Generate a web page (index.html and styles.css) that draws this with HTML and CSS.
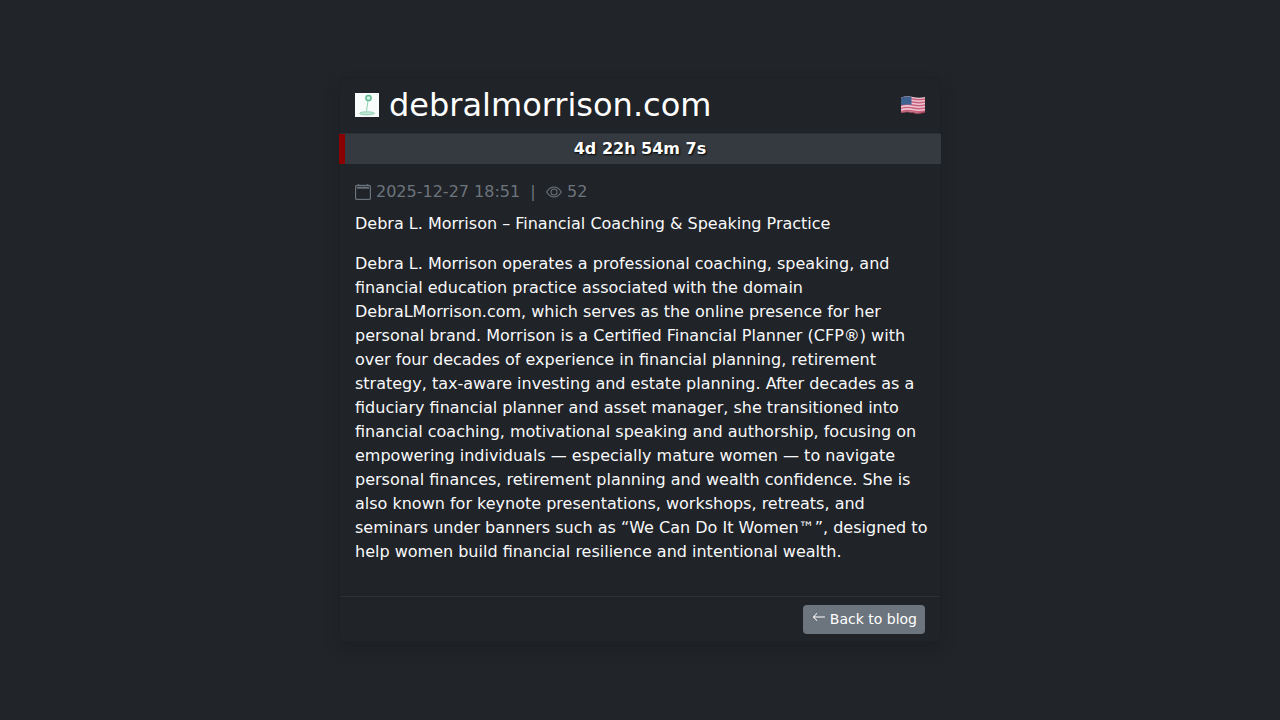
FILE: index.html
```html
<!DOCTYPE html>
<html lang="en">
<head>
    <meta charset="UTF-8">
    <title>debralmorrison.com</title>
    <link rel="stylesheet" href="styles.css">
</head>
<body>
    <div class="post-card">
        <div class="post-header">
            <h1 class="post-title">
                <svg class="favicon" width="24" height="24" viewBox="0 0 24 24">
                    <rect width="24" height="24" fill="#f8fcfa"/>
                    <circle cx="13.5" cy="5" r="2.6" fill="#d5efe3" stroke="#5fbb92" stroke-width="1.5"/>
                    <path d="M13 8 L11.5 18" stroke="#8fd2b4" stroke-width="1" fill="none"/>
                    <ellipse cx="12" cy="20.3" rx="7.5" ry="1.5" fill="#c3e8d6" stroke="#7cc8a6" stroke-width=".8"/>
                </svg>
                <span>debralmorrison.com</span>
            </h1>
            <svg class="flag" width="24" height="18" viewBox="0 0 24 18">
                <path d="M0 1.5 Q6 -.5 12 1 T24 1 V16 Q18 18.500 12 16.800 T0 17 Z" fill="#eec6d2"/>
                <path d="M0 3.500 Q6 1.500 12 3 T24 3 M0 6.500 Q6 4.500 12 6 T24 6 M0 9.500 Q6 7.500 12 9 T24 9 M0 12.500 Q6 10.500 12 12 T24 12 M0 15.500 Q6 13.500 12 15 T24 15" fill="none" stroke="#c9607c" stroke-width="1.300"/>
                <path d="M0 16.500 Q6 15 12 16.500 T24 16" fill="none" stroke="#a03a55" stroke-width="1.200"/>
                <path d="M0 1.500 Q5 -.2 10.500 .8 V8.800 Q5 8 0 9.200 Z" fill="#3f6290"/>
            </svg>
        </div>
        <div class="countdown">4d 22h 54m 7s</div>
        <div class="post-body">
            <div class="post-meta">
                <svg class="meta-icon date-icon" width="16" height="16" viewBox="0 0 16 16" fill="currentColor" stroke="currentColor" stroke-width=".35">
                    <path d="M3.500 0a.5.5 0 0 1 .5.5V1h8V.5a.5.5 0 0 1 1 0V1h1a2 2 0 0 1 2 2v11a2 2 0 0 1-2 2H2a2 2 0 0 1-2-2V3a2 2 0 0 1 2-2h1V.5a.5.5 0 0 1 .5-.5zM2 2a1 1 0 0 0-1 1v11a1 1 0 0 0 1 1h12a1 1 0 0 0 1-1V3a1 1 0 0 0-1-1H2z"/>
                    <path d="M2 3.500a.5.5 0 0 1 .5-.5h11a.5.5 0 0 1 .5.5v1H2v-1z"/>
                </svg>
                <span>2025-12-27 18:51</span>
                <span class="sep">|</span>
                <svg class="meta-icon view-icon" width="16" height="16" viewBox="0 0 16 16" fill="currentColor">
                    <path d="M16 8s-3-5.500-8-5.500S0 8 0 8s3 5.500 8 5.500S16 8 16 8zM1.173 8a13.133 13.133 0 0 1 1.660-2.043C4.120 4.668 5.880 3.500 8 3.500c2.120 0 3.879 1.168 5.168 2.457A13.133 13.133 0 0 1 14.828 8c-.058.087-.122.183-.195.288-.335.48-.83 1.120-1.465 1.755C11.879 11.332 10.119 12.500 8 12.500c-2.120 0-3.879-1.168-5.168-2.457A13.134 13.134 0 0 1 1.172 8z"/>
                    <path d="M8 5.500a2.500 2.500 0 1 0 0 5 2.500 2.500 0 0 0 0-5zM4.500 8a3.500 3.500 0 1 1 7 0 3.500 3.500 0 0 1-7 0z"/>
                </svg>
                <span>52</span>
            </div>
            <p class="post-subtitle">Debra L. Morrison – Financial Coaching &amp; Speaking Practice</p>
            <p class="post-text">Debra L. Morrison operates a professional coaching, speaking, and financial education practice associated with the domain DebraLMorrison.com, which serves as the online presence for her personal brand. Morrison is a Certified Financial Planner (CFP®) with over four decades of experience in financial planning, retirement strategy, tax-aware investing and estate planning. After decades as a fiduciary financial planner and asset manager, she transitioned into financial coaching, motivational speaking and authorship, focusing on empowering individuals — especially mature women — to navigate personal finances, retirement planning and wealth confidence. She is also known for keynote presentations, workshops, retreats, and seminars under banners such as “We Can Do It Women™”, designed to help women build financial resilience and intentional wealth.</p>
        </div>
        <div class="post-footer">
            <a class="back-btn" href="#">
                <svg class="back-arrow" width="14" height="14" viewBox="0 0 16 16" fill="currentColor">
                    <path fill-rule="evenodd" d="M15 8a.5.5 0 0 0-.5-.5H2.707l3.147-3.146a.5.5 0 1 0-.708-.708l-4 4a.5.5 0 0 0 0 .708l4 4a.5.5 0 0 0 .708-.708L2.707 8.500H14.500A.5.5 0 0 0 15 8z"/>
                </svg>
                Back to blog
            </a>
        </div>
    </div>
</body>
</html>
```

FILE: styles.css
```css
html, body {
    height: 100%;
    margin: 0;
    padding: 0;
}
body {
    background: #212529;
    color: #f8f9fa;
    font-family: "DejaVu Sans", sans-serif;
    font-size: 16px;
    line-height: 24px;
    display: flex;
    justify-content: center;
    align-items: flex-start;
}
.post-card {
    width: 600px;
    margin-top: 77px;
    background: #202328;
    border: 1px solid #1d2024;
    border-radius: 6px;
    box-shadow: 0 8px 16px #00000026;
}
.post-header {
    height: 56px;
    box-sizing: border-box;
    padding: 0 15px 2px;
    display: flex;
    align-items: center;
    justify-content: space-between;
    border-bottom: 1px solid #2b3035;
}
.post-title {
    margin: 0;
    font-size: 32px;
    font-weight: 400;
    line-height: 38px;
    color: #fff;
    display: flex;
    align-items: center;
    gap: 10px;
}
.favicon {
    display: block;
    filter: blur(.4px);
}
.flag {
    display: block;
    filter: blur(.5px);
}
.countdown {
    height: 30px;
    box-sizing: border-box;
    margin-right: -1px;
    margin-left: -1px;
    padding-right: 6px;
    background: #343a40;
    border-left: 6px solid #8b0000;
    color: #fff;
    font-weight: 700;
    line-height: 29px;
    text-align: center;
    text-shadow: 1px 1px 2px #000;
}
.post-body {
    padding: 16px 12px 16px 15px;
}
.post-meta {
    color: #6c757d;
    display: flex;
    align-items: center;
    margin-bottom: 8px;
}
.date-icon {
    margin-right: 5px;
}
.view-icon {
    margin-right: 5.5px;
}
.sep {
    margin: 0 10px;
}
.post-subtitle {
    margin: 0 0 16px;
}
.post-text {
    margin: 0 0 16px;
}
.post-footer {
    height: 45px;
    box-sizing: border-box;
    padding: 8px 15px;
    display: flex;
    justify-content: flex-end;
    border-top: 1px solid #2b3035;
}
.back-btn {
    height: 29px;
    box-sizing: border-box;
    padding: 1px 8px 3px;
    background: #6c757d;
    border-radius: 4px;
    color: #fff;
    font-size: 14px;
    line-height: 24px;
    text-decoration: none;
    display: flex;
    align-items: center;
    gap: 4px;
}
.back-arrow {
    margin-bottom: 4px;
    margin-left: 1px;
}
```
